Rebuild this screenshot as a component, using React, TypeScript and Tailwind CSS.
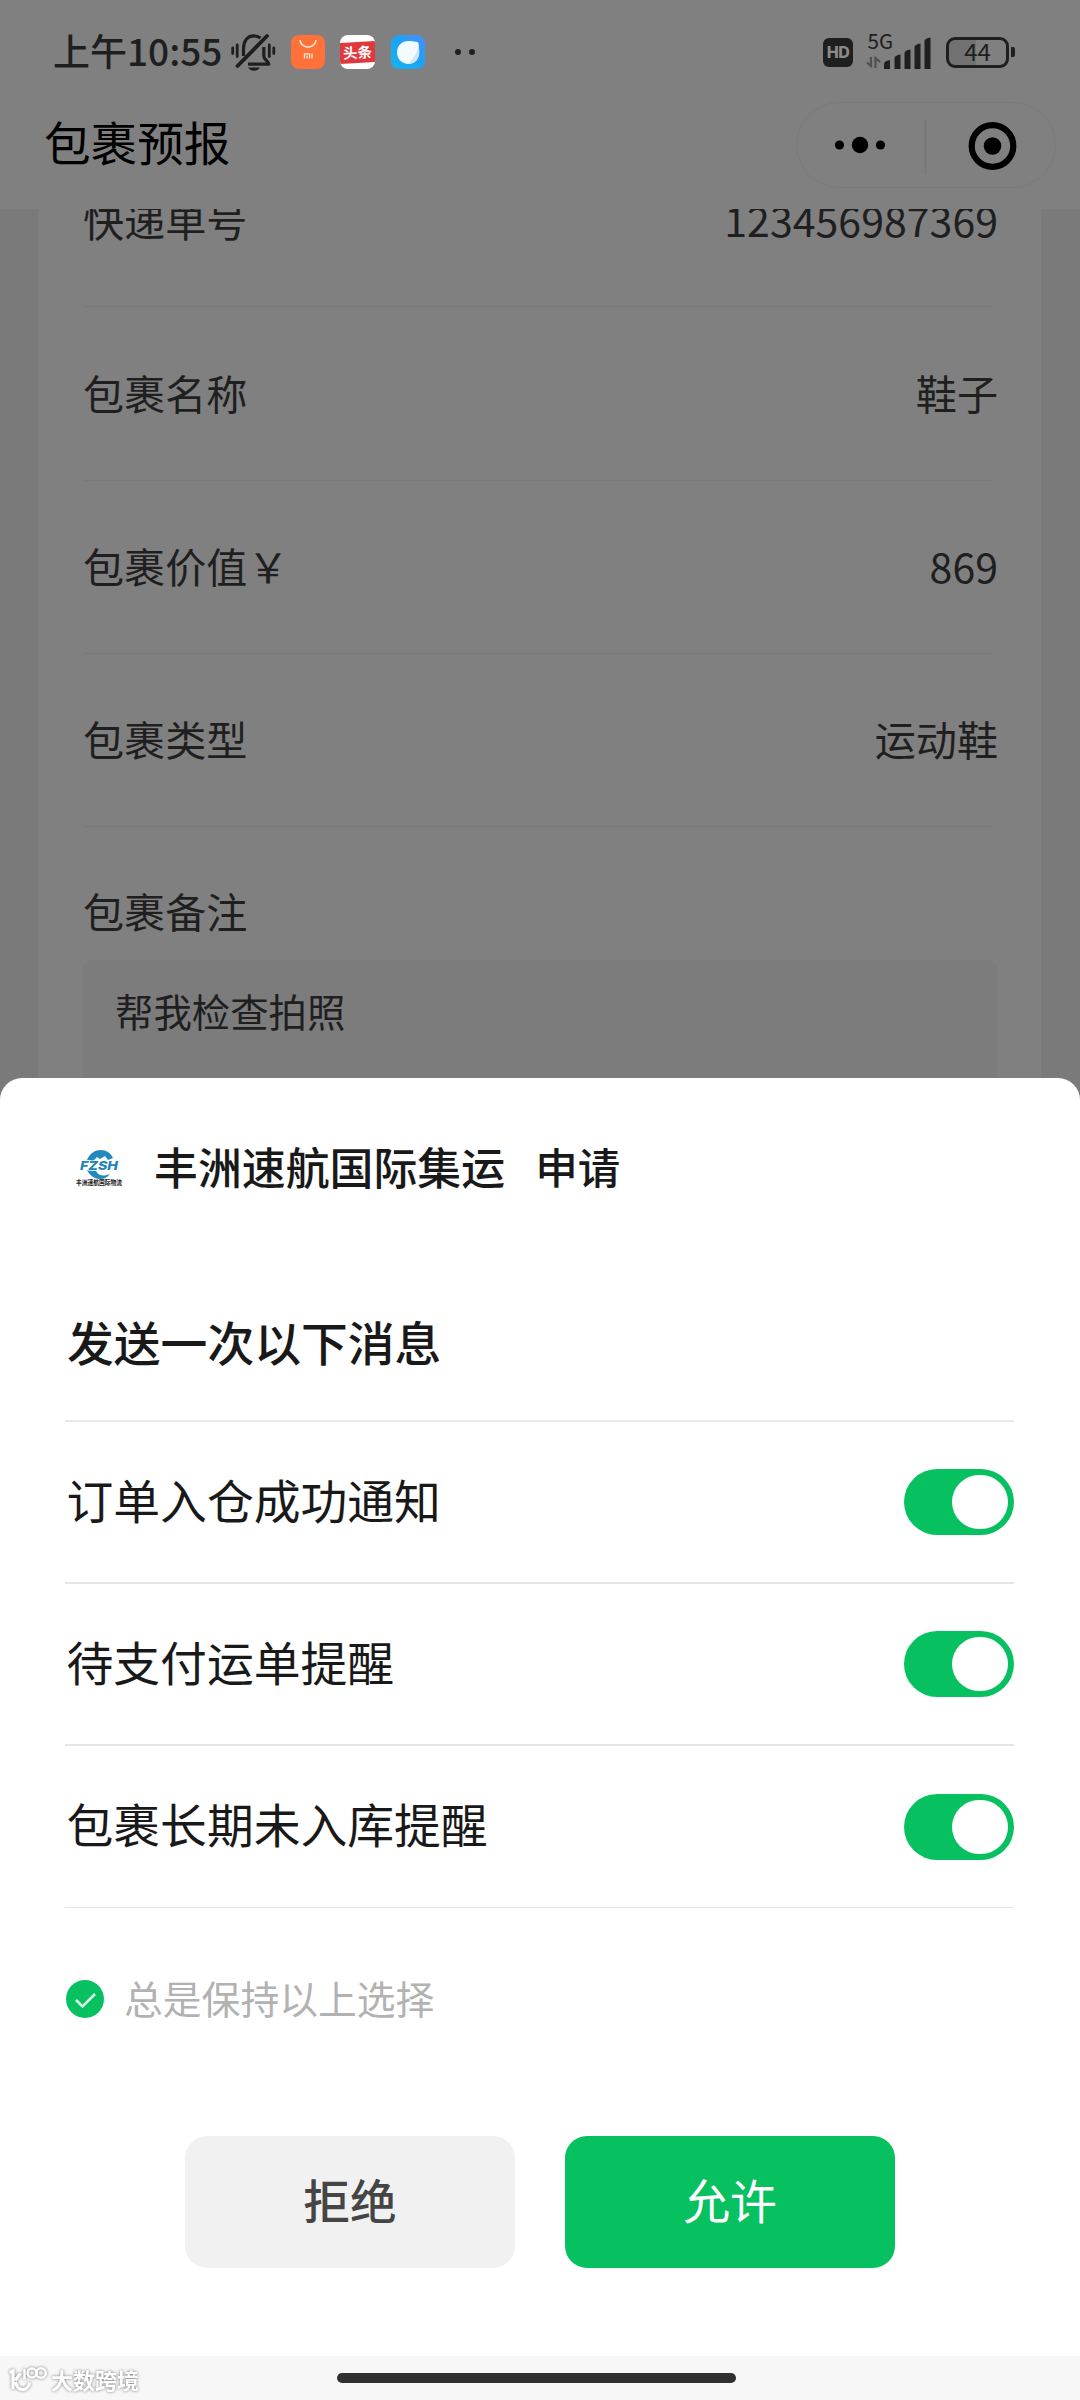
const cjk = "font-['Noto_Sans_CJK_SC',sans-serif]";

function BellOff() {
  return (
    <svg viewBox="0 0 46 38" className="ml-[10px] h-[38px] w-[46px]" fill="none" stroke="#1f1f1f" strokeWidth="3.2">
      <path d="M12.500 23V16C12.500 8 16.500 2.800 22.500 2.800c3 0 5 .7 7 2.200" />
      <path d="M32.800 14v9c0 3.500 4.500 5 5 8.200H17" strokeLinejoin="round" />
      <path d="M6.500 33 36 3" strokeWidth="3.800" strokeLinecap="round" />
      <path d="M1.700 15v5.500M6.200 12v11.500M38.300 12v11.500M42.800 15v5.500" strokeWidth="2.800" strokeLinecap="round" />
      <path d="M17 34.500h12c-1.500 2.200-3.500 3.200-6 3.200s-4.500-1-6-3.200Z" fill="#1f1f1f" stroke="none" />
    </svg>
  );
}

function StatusBar() {
  return (
    <div className="flex h-[104px] items-center pl-[53px] text-[#1f1f1f]">
      <span className="w-[168px] pb-[3px] text-[37px] leading-none font-medium whitespace-nowrap">上午10:55</span>
      <BellOff />
      <svg viewBox="0 0 34 34" className="ml-[14px] size-[34px]">
        <rect width="34" height="34" rx="8" fill="#ff7138" />
        <path d="M9 5a8 7 0 0 0 16 0" fill="none" stroke="#ffe6d8" strokeWidth="1.600" />
        <path d="M13.500 23.500v-4.700h5v4.700M16 20.500v3M21 18.500v5" fill="none" stroke="#ffe6d8" strokeWidth="1.300" />
      </svg>
      <div className="ml-[15px] flex h-[34px] w-[35px] items-center overflow-hidden rounded-[8px] bg-white">
        <div className="-mx-px flex h-[21px] w-[37px] shrink-0 -rotate-3 items-center justify-center bg-[#e0393d] text-[14.500px] leading-none font-bold whitespace-nowrap text-white">
          头条
        </div>
      </div>
      <svg viewBox="0 0 34 34" className="ml-[16px] size-[34px]">
        <defs>
          <linearGradient id="browser" x1="1" y1="0" x2="0" y2="1">
            <stop offset="0" stopColor="#4b8dfc" />
            <stop offset="0.450" stopColor="#1da2f6" />
            <stop offset="1" stopColor="#12b5ee" />
          </linearGradient>
        </defs>
        <rect width="34" height="34" rx="8" fill="url(#browser)" />
        <path d="M6 17.500C6 10.500 11 6 17.500 6c3 0 5 .5 7.500.7 2 .2 2.500 1 2.700 2.600.2 2 .5 5 .5 7.700C28.200 24 24 29 17.500 29S6 24 6 17.500Z" fill="#f4fbff" />
        <path d="M27.700 10c.3 2.500.5 4.700.5 7C28.200 24 24 29 16.500 29c5-4 9-10 11.200-19Z" fill="#cfe6f8" />
      </svg>
      <div className="ml-[30px] flex gap-[8px]">
        <i className="size-[6px] rounded-full bg-[#1f1f1f]" />
        <i className="size-[6px] rounded-full bg-[#1f1f1f]" />
      </div>
      <div className="mr-[65px] ml-auto flex items-center">
        <div className="flex h-[29px] w-[30px] items-center justify-center rounded-[6px] bg-[#1f1f1f] font-['Inter',sans-serif] text-[16px] leading-none font-extrabold tracking-[-0.5px] text-[#8a8a8a]">
          HD
        </div>
        <svg viewBox="0 0 68 38" className="ml-[12px] h-[38px] w-[68px] overflow-visible">
          <text x="2.500" y="15.500" fontSize="20.500" fill="#1f1f1f" className="font-['Noto_Sans_CJK_SC',sans-serif]">5G</text>
          <path d="M6 24v9l-4-3.500M10.500 35v-10l4.500 4" fill="none" stroke="#505050" strokeWidth="2.200" />
          <g fill="#1f1f1f">
            <path d="M19 31q0-3 6-4v9h-6ZM29.500 25q0-2.500 6-3.500V36h-6ZM39.500 20q0-2.500 6-3.500V36h-6ZM49.500 14q0-2.500 6-3.500V36h-6ZM59.500 8q0-2.500 6-3.500V36h-6Z" />
          </g>
        </svg>
        <div className="ml-[13px] flex h-[31px] w-[63px] items-center justify-center rounded-[9px] border-[3px] border-[#1f1f1f] bg-[linear-gradient(90deg,#727272_48%,#808080_48%)] pb-[2px] text-[24px] leading-none">
          44
        </div>
        <i className="ml-[2px] h-[10px] w-[4px] rounded-r-[2px] bg-[#1f1f1f]" />
      </div>
    </div>
  );
}

function Header() {
  return (
    <div className="flex h-[82px] items-center justify-between pr-[24px] pl-[44px] text-black">
      <h1 className="pb-[7px] text-[46.600px] leading-none">包裹预报</h1>
      <svg viewBox="0 0 260 86" className="h-[86px] w-[260px]">
        <rect x="0.500" y="0.500" width="259" height="85" rx="42.500" fill="none" stroke="#7b7b7b" strokeWidth="1" />
        <path d="M129.500 18v55" stroke="#747474" strokeWidth="1.500" />
        <circle cx="43.500" cy="43" r="4.600" />
        <circle cx="64" cy="43" r="8.200" />
        <circle cx="84.500" cy="43" r="4.600" />
        <circle cx="196.500" cy="44" r="20.800" fill="none" stroke="#000" strokeWidth="6.200" />
        <circle cx="196.500" cy="44" r="8.800" />
      </svg>
    </div>
  );
}

const fields = [
  ["快递单号", "123456987369"],
  ["包裹名称", "鞋子"],
  ["包裹价值\uFFE5", "869"],
  ["包裹类型", "运动鞋"],
];

const notices = ["订单入仓成功通知", "待支付运单提醒", "包裹长期未入库提醒"];

function Field({ label, value }: { label: string; value: string }) {
  return (
    <div className="flex h-[173.200px] shrink-0 items-center justify-between border-b-[1.500px] border-[#7a7a7a] pb-[2px]">
      <span>{label}</span>
      <span className="-mr-[5px]">{value}</span>
    </div>
  );
}

function Toggle() {
  return (
    <div className="flex h-[66px] w-[110px] items-center justify-end rounded-full bg-[#07c160] pr-[6px]">
      <i className="h-[54px] w-[56px] rounded-full bg-white" />
    </div>
  );
}

function BrandLogo() {
  return (
    <svg viewBox="0 0 48 38" className="h-[38px] w-[48px] overflow-visible">
      <path d="M12 11C15 4 20 1 26 1c5 0 10 3 12 8l-5 2-3-4-5 3-3-2-4 4Z" fill="#2189bd" />
      <path d="M12 21c3 6 8 9 13 9 4 0 8-2 10-5-5 2-11 3-14-3Z" fill="#2189bd" />
      <text x="5" y="20.500" textLength="38" lengthAdjust="spacingAndGlyphs" fontSize="12" fontWeight="800" fontStyle="italic" fill="#1d83b8" stroke="#fff" strokeWidth="1" paintOrder="stroke" className="font-['Inter',sans-serif]">FZSH</text>
      <text x="1" y="36" textLength="46" lengthAdjust="spacingAndGlyphs" fontSize="7" fontWeight="700" fill="#222" className="font-['Noto_Sans_CJK_SC',sans-serif]">丰洲速航国际物流</text>
    </svg>
  );
}

function Sheet() {
  return (
    <section className="relative -mt-[40px] flex h-[1322px] flex-col rounded-t-[22px] bg-white text-[#191919]">
      <div className="flex h-[180px] items-center pl-[75px] text-[43.900px] leading-none font-medium">
        <BrandLogo />
        <span className="ml-[31px] pb-[3px]">丰洲速航国际集运</span>
        <span className="ml-[30px] pb-[3px] text-[42.500px]">申请</span>
      </div>
      <div className="mr-[66px] ml-[65px]">
        <h2 className="flex h-[164px] items-center border-b-[2px] border-[#e9e9e9] pt-[5px] pl-[2px] text-[46.800px] leading-none font-medium">
          发送一次以下消息
        </h2>
        {notices.map((notice) => (
          <div key={notice} className="flex h-[162px] items-center justify-between border-b-[2px] border-[#e5e5e5] pl-[1.500px] text-[46.800px] leading-none last:border-b">
            <span className="pb-[6px]">{notice}</span>
            <Toggle />
          </div>
        ))}
      </div>
      <div className="mt-[71px] ml-[66px] flex h-[40px] items-center text-[38.800px] leading-none text-[#b2b2b2]">
        <svg viewBox="0 0 38 38" className="size-[38px]">
          <circle cx="19" cy="19" r="19" fill="#07c160" />
          <path d="m10 20 6.500 6.500L29 14" fill="none" stroke="#d9ffe9" strokeWidth="2.600" />
        </svg>
        <span className="ml-[20px] pb-[4px]">总是保持以上选择</span>
      </div>
      <div className="mt-[117px] flex justify-center gap-[50px] text-[46.800px] leading-none">
        <button className="h-[132px] w-[330px] rounded-[22px] bg-[#f1f1f1] pb-[5px] font-medium text-[#454545]">拒绝</button>
        <button className="h-[132px] w-[330px] rounded-[22px] bg-[#07c160] pb-[5px] text-white">允许</button>
      </div>
      <footer className="relative mt-auto flex h-[44px] items-start bg-[#f7f7f7] pt-[17px] pl-[337px]">
        <div className="absolute top-[8px] left-[8px] flex items-center drop-shadow-[0_0_1.500px_#777]">
          <svg viewBox="0 0 42 30" className="h-[30px] w-[42px]" fill="none" stroke="#fff" strokeWidth="3.2">
            <path d="M1.500 8.500 5 7v18M7 16.500l5.500-7M7.500 18c2 10 12.500 10 14 .5" />
            <path d="M16.500 5v10" strokeWidth="2.500" />
            <circle cx="24" cy="9" r="4.500" strokeWidth="2.500" />
            <circle cx="33" cy="9" r="4.800" strokeWidth="2.500" />
          </svg>
          <span className="ml-[1px] text-[22px] leading-none font-bold text-white">大数跨境</span>
        </div>
        <i className="h-[10px] w-[399px] rounded-full bg-[#303030]" />
      </footer>
    </section>
  );
}

export default function App() {
  return (
    <main className={`${cjk} h-[2400px] w-[1080px] overflow-hidden bg-[#808080]`}>
      <div className="h-[209px]">
        <StatusBar />
        <Header />
      </div>
      <div className="h-[909px] overflow-hidden bg-[#7a7a7a] pr-[39px] pl-[38px]">
        <div className="flex h-full flex-col justify-end bg-[#808080] pr-[48px] pl-[45px] text-[41.100px] leading-none text-[#1f1f1f]">
          {fields.map(([label, value]) => (
            <Field key={label} label={label} value={value} />
          ))}
          <div className="flex h-[133px] shrink-0 items-center pt-[35px]">包裹备注</div>
          <div className="-mr-[4px] h-[158px] shrink-0 rounded-[8px] bg-[#7c7c7c] pt-[31px] pl-[32px] text-[38.400px]">
            帮我检查拍照
          </div>
        </div>
      </div>
      <Sheet />
    </main>
  );
}
